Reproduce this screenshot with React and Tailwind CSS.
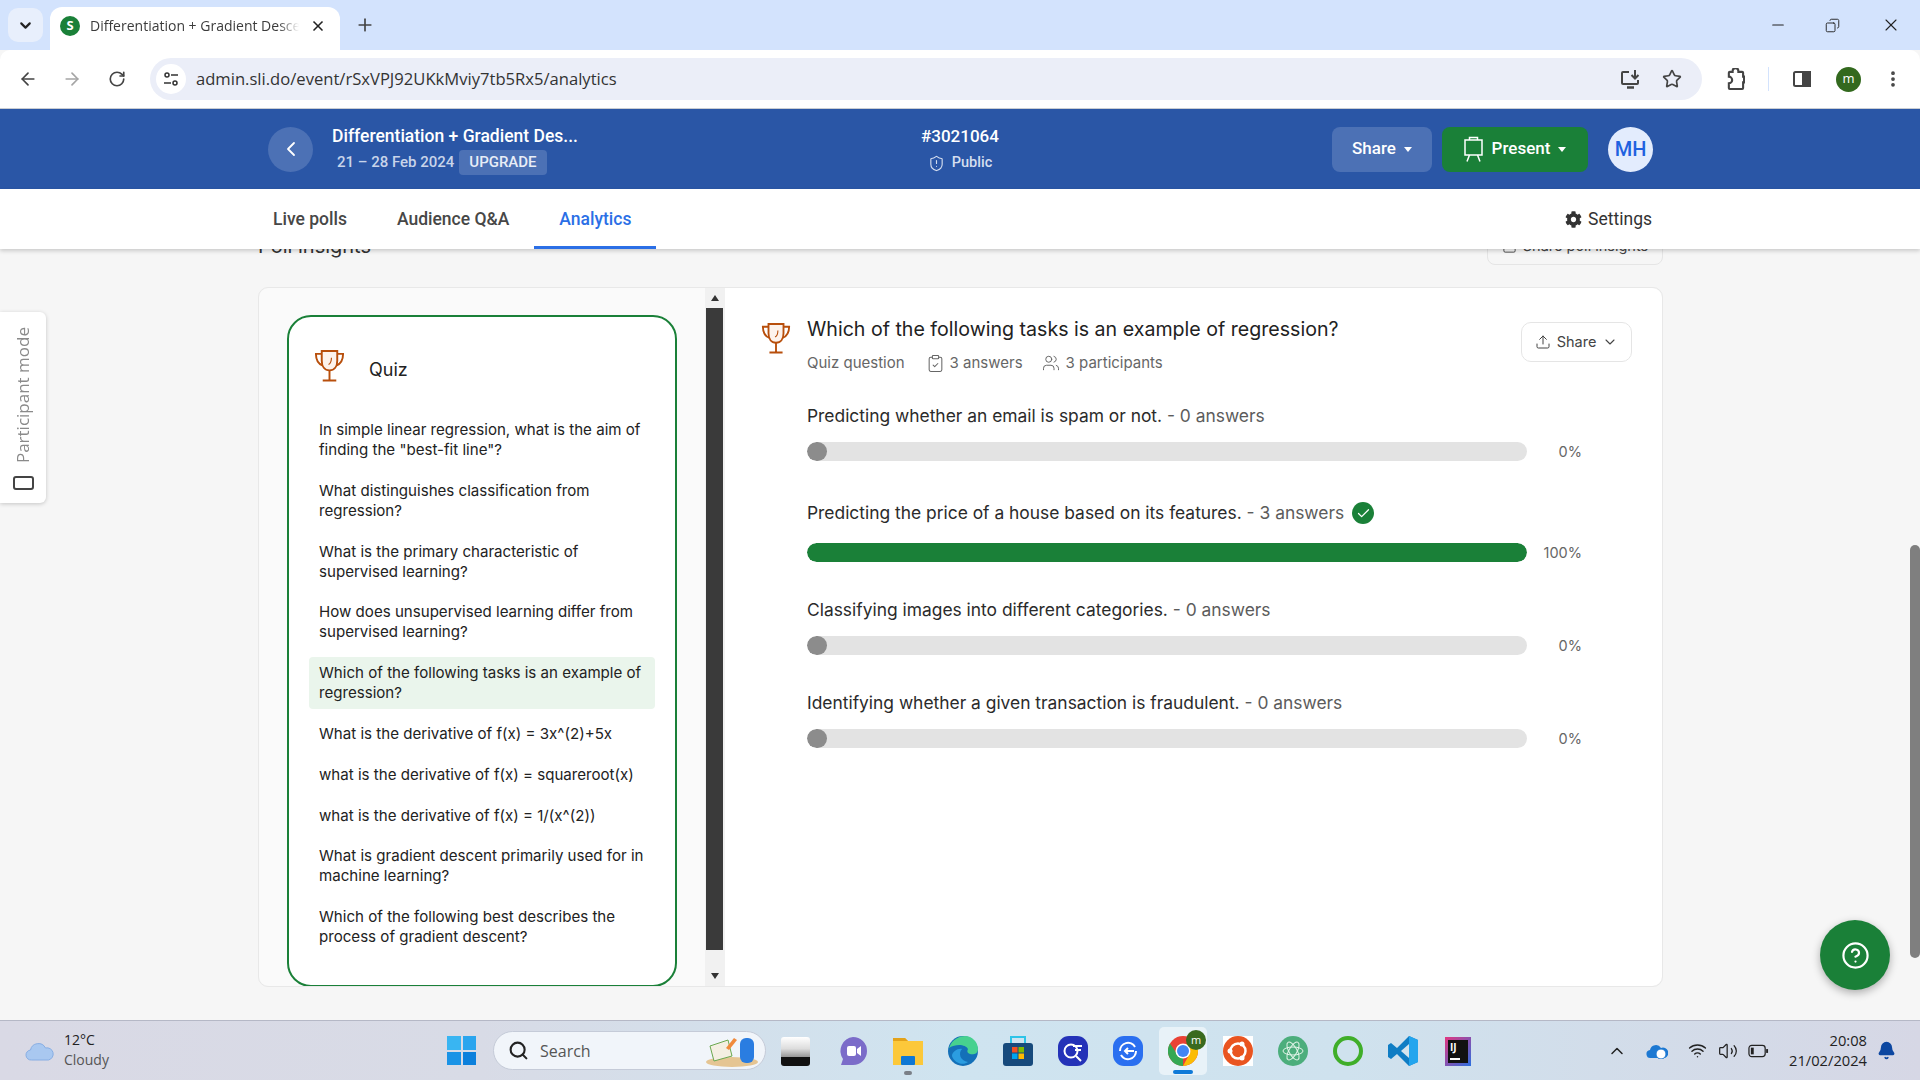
import { ArrowLeft, ArrowRight, RotateCw, Plus, X, ChevronDown, ChevronLeft, Star, EllipsisVertical, Minus, Upload, Users, ClipboardCheck, Check, Search, ChevronUp, Wifi, Volume2, Bell, CircleHelp, ShieldAlert, Copy } from "lucide-react";
import { FaCog } from "react-icons/fa";

const questions = [
  'In simple linear regression, what is the aim of finding the "best-fit line"?',
  "What distinguishes classification from regression?",
  "What is the primary characteristic of supervised learning?",
  "How does unsupervised learning differ from supervised learning?",
  "Which of the following tasks is an example of regression?",
  "What is the derivative of f(x) = 3x^(2)+5x",
  "what is the derivative of f(x) = squareroot(x)",
  "what is the derivative of f(x) = 1/(x^(2))",
  "What is gradient descent primarily used for in machine learning?",
  "Which of the following best describes the process of gradient descent?",
];

const options = [
  { label: "Predicting whether an email is spam or not.", count: "0 answers", pct: 0 },
  { label: "Predicting the price of a house based on its features.", count: "3 answers", pct: 100, correct: true },
  { label: "Classifying images into different categories.", count: "0 answers", pct: 0 },
  { label: "Identifying whether a given transaction is fraudulent.", count: "0 answers", pct: 0 },
];

function Trophy({ className }) {
  return (
    <svg viewBox="0 0 32 34" className={className} fill="none" stroke="#b84f0c" strokeWidth="2">
      <path d="M8 2h16v10c0 6-3 10-8 10s-8-4-8-10z" fill="#fdf3ec" />
      <path d="M8 5H2c0 6 2 10 7 12M24 5h6c0 6-2 10-7 12" />
      <path d="M16 22v10M9 32.500h14" />
      <path d="M18 9c0 4-1 6-3 7" strokeWidth="1.200" />
    </svg>
  );
}

function Caret() {
  return <span className="ml-2 w-0 h-0 border-x-[4.500px] border-x-transparent border-t-[5px] border-t-white" />;
}

function OptionRow({ opt }) {
  return (
    <div className="flex flex-col gap-[14px]">
      <div className="flex items-center gap-2 text-[17.400px] leading-[24px] text-[#2b2b2b]">
        <span>
          {opt.label} <span className="text-[#5c5c5c]">- {opt.count}</span>
        </span>
        {opt.correct && (
          <span className="w-[22px] h-[22px] my-[5px] rounded-full bg-[#1a8038] flex items-center justify-center">
            <Check size={15} color="white" strokeWidth={2} />
          </span>
        )}
      </div>
      <div className="flex items-center h-[19px]">
        <div className="w-[720px] h-[19px] rounded-full bg-[#e3e3e3] overflow-hidden">
          {opt.pct > 0 ? (
            <div className="h-full rounded-full bg-[#1a8038]" style={{ width: `${opt.pct}%` }} />
          ) : (
            <div className="h-full w-[20px] rounded-full bg-[#8c8c8c]" />
          )}
        </div>
        <span className="w-[55px] text-right text-[14.500px] leading-[19px] text-[#666]">{opt.pct}%</span>
      </div>
    </div>
  );
}

function ChromeBar() {
  return (
    <div className="font-['Open_Sans',sans-serif]">
      <div className="h-[50px] bg-[#d3e3fd] flex items-end relative">
        <div className="w-[35px] h-[34px] ml-[8px] mb-[8px] rounded-[10px] bg-[#e8effc] flex items-center justify-center">
          <ChevronDown size={17} strokeWidth={3} color="#222" />
        </div>
        <div className="w-[290px] h-[43px] ml-[7px] bg-white rounded-t-[12px] flex items-center pl-[10px] pb-[6px]">
          <span className="w-[20px] h-[20px] rounded-full bg-[#1a8038] text-white text-[13px] font-bold flex items-center justify-center">S</span>
          <span className="ml-[10px] w-[209px] text-[14px] text-[#3c3c3c] whitespace-nowrap overflow-hidden [mask-image:linear-gradient(to_right,black_90%,transparent)]">Differentiation + Gradient Descent</span>
          <X size={16} strokeWidth={2.500} color="#222" className="ml-[11px]" />
        </div>
        <Plus size={20} strokeWidth={2} color="#444" className="ml-[15px] mb-[15px]" />
        <div className="ml-auto self-start flex items-center h-[50px] text-[#222]">
          <Minus size={18} strokeWidth={1.500} className="mr-[38px]" />
          <Copy size={15} strokeWidth={1.500} className="mr-[41px] -scale-x-100" />
          <X size={20} strokeWidth={1.300} className="mr-[19px]" />
        </div>
      </div>
      <div className="h-[59px] bg-white rounded-t-[10px] border-b border-[#c9cdd3] flex items-center text-[#444]">
        <ArrowLeft size={20} className="ml-[18px]" strokeWidth={2} />
        <ArrowRight size={20} className="ml-[24px] text-[#a5a5a5]" strokeWidth={2} />
        <RotateCw size={18} className="ml-[26px]" strokeWidth={2.200} />
        <div className="ml-[24px] w-[1552px] h-[42px] rounded-full bg-[#ebeef8] flex items-center pl-[6px] pr-[20px]">
          <span className="w-[30px] h-[30px] rounded-full bg-white flex items-center justify-center">
            <svg viewBox="0 0 16 16" className="w-[16px] h-[16px]" fill="none" stroke="#333" strokeWidth="1.500">
              <circle cx="4" cy="4" r="2" />
              <path d="M8 4h7M1 12h7" />
              <circle cx="12" cy="12" r="2" />
            </svg>
          </span>
          <span className="ml-[10px] text-[16.600px] text-[#333]">admin.sli.do/event/rSxVPJ92UKkMviy7tb5Rx5/analytics</span>
          <svg viewBox="0 0 22 20" className="ml-auto w-[22px] h-[20px]" fill="none" stroke="#444" strokeWidth="2">
            <path d="M9 3H3a1 1 0 0 0-1 1v10a1 1 0 0 0 1 1h14a1 1 0 0 0 1-1v-3" />
            <path d="M7 18.500h7" strokeWidth="2.500" />
            <path d="M15 1v8M11.500 6l3.500 3.500L18.500 6" />
          </svg>
          <Star size={20} className="ml-[20px]" strokeWidth={2} />
        </div>
        <svg viewBox="0 0 20 24" className="ml-[24px] w-[19px] h-[23px]" fill="none" stroke="#444" strokeWidth="2.200">
          <path d="M7 4V3a3 3 0 0 1 6 0v1h4a1 1 0 0 1 1 1v4h1v6h-1v6a1 1 0 0 1-1 1H4a1 1 0 0 1-1-1v-5a3 3 0 0 0 0-7V5a1 1 0 0 1 1-1z" />
        </svg>
        <span className="ml-[23px] w-px h-[24px] bg-[#d3e3fd]" />
        <svg viewBox="0 0 20 20" className="w-[20px] h-[20px] ml-[23px]" fill="none" stroke="#444" strokeWidth="2">
          <rect x="2" y="3" width="16" height="14" rx="1.500" />
          <rect x="11" y="3" width="7" height="14" fill="#444" />
        </svg>
        <span className="ml-[24px] w-[25px] h-[25px] rounded-full bg-[#33691e] text-white text-[13px] flex items-center justify-center">m</span>
        <EllipsisVertical size={20} className="ml-[22px]" strokeWidth={2.500} />
      </div>
    </div>
  );
}

function AppHeader() {
  return (
    <div className="relative z-20 font-['Roboto',sans-serif]">
      <div className="h-[80px] bg-[#2a56a6] flex items-center pl-[268px] pr-[267px] text-white">
        <span className="w-[45px] h-[45px] rounded-full bg-[#4c71b5] flex items-center justify-center">
          <ChevronLeft size={24} strokeWidth={1.800} />
        </span>
        <div className="ml-[19px] w-[260px]">
          <div className="text-[17.500px] leading-[24px] font-medium whitespace-nowrap">Differentiation + Gradient Des...</div>
          <div className="flex items-center mt-[2px] ml-[5px]">
            <span className="text-[15px] font-medium text-[#c8d4ea]">21 – 28 Feb 2024</span>
            <span className="ml-[5px] h-[25px] px-[10px] rounded-[4px] bg-[#4c71b5] text-[15px] font-medium text-[#e8edf7] flex items-center">UPGRADE</span>
          </div>
        </div>
        <div className="ml-[268px] w-[200px] flex flex-col items-center">
          <span className="text-[17px] leading-[24px] font-medium">#3021064</span>
          <span className="mt-[4px] flex items-center gap-[7px] text-[14.500px] leading-[22px] font-medium text-[#d5deef]">
            <ShieldAlert size={17} strokeWidth={1.600} /> Public
          </span>
        </div>
        <button className="ml-auto w-[100px] h-[45px] rounded-[8px] bg-[#4c71b5] text-[17px] font-medium flex items-center justify-center">
          Share <Caret />
        </button>
        <button className="ml-[10px] w-[146px] h-[45px] rounded-[8px] bg-[#1a8038] text-[17px] font-medium flex items-center justify-center pr-[2px]">
          <svg viewBox="0 0 22 26" className="w-[23px] h-[26px] mr-[7px]" fill="none" stroke="white" strokeWidth="1.500">
            <path d="M7 4V1.500h8V4" />
            <path d="M2.500 4h17v15h-17z" />
            <path d="M7 19l-2.500 6.500M15 19l2.500 6.500" />
          </svg>
          Present <Caret />
        </button>
        <span className="ml-[20px] w-[45px] h-[45px] rounded-full bg-[#e3ecfd] text-[#1f62e0] text-[20px] font-medium flex items-center justify-center">MH</span>
      </div>
      <div className="h-[60px] bg-white shadow-[0_2px_4px_rgba(0,0,0,0.18)] flex items-stretch pl-[248px] pr-[268px] text-[17.500px] text-[#474747] font-medium">
        <span className="px-[25px] flex items-center">Live polls</span>
        <span className="px-[25px] flex items-center">Audience Q&amp;A</span>
        <span className="px-[25px] pt-[3px] flex items-center text-[#2b6fe6] border-b-[3px] border-[#2b6fe6]">Analytics</span>
        <span className="ml-auto flex items-center gap-[6px] text-[#333] font-normal">
          <FaCog size={17} color="#333" /> Settings
        </span>
      </div>
    </div>
  );
}

function QuizList() {
  return (
    <div className="w-[446px] bg-[#fafafa] rounded-l-[10px] pt-[27px] pl-[28px] flex items-start">
      <div className="w-[390px] h-[672px] bg-white rounded-[24px] border-2 border-[#1a8038] pl-[20px] pr-[20px]">
        <div className="flex items-center h-[97px] pl-[5px]">
          <Trophy className="w-[31px] h-[33px]" />
          <span className="ml-[24px] mt-[8px] text-[18px] text-[#222]">Quiz</span>
        </div>
        <div className="flex flex-col gap-[8.800px]">
          {questions.map((q, i) => (
            <div key={i} className={i === 4 ? "px-[10px] py-[6px] rounded-[4px] bg-[#eaf5ec] text-[15.100px] leading-[20px] text-[#222]" : "px-[10px] py-[6px] text-[15.100px] leading-[20px] text-[#222]"}>
              {q}
            </div>
          ))}
        </div>
      </div>
    </div>
  );
}

function ListScrollbar() {
  return (
    <div className="w-[20px] bg-[#f1f1f1] flex flex-col items-center pl-[1px] pr-[2px]">
      <span className="h-[20px] flex items-center">
        <span className="w-0 h-0 border-x-[4.500px] border-x-transparent border-b-[6px] border-b-[#333]" />
      </span>
      <div className="w-full h-[642px] bg-[#3a3a3a]" />
      <span className="h-[36px] pt-[23px]">
        <span className="block w-0 h-0 border-x-[4.500px] border-x-transparent border-t-[6px] border-t-[#333]" />
      </span>
    </div>
  );
}

function QuestionPanel() {
  return (
    <div className="flex-1 bg-white rounded-r-[10px] pl-[36px] pr-[30px] pt-[27px]">
      <div className="flex items-start">
        <Trophy className="w-[30px] h-[32px] mt-[7px]" />
        <div className="ml-[16px]">
          <div className="text-[19.600px] leading-[28px] text-[#222]">Which of the following tasks is an example of regression?</div>
          <div className="flex items-center mt-[10px] text-[15px] leading-[20px] text-[#666]">
            <span>Quiz question</span>
            <ClipboardCheck size={19} strokeWidth={1.300} className="ml-[21px] mr-[5px]" />
            <span>3 answers</span>
            <Users size={18} strokeWidth={1.300} className="ml-[19px] mr-[6px]" />
            <span>3 participants</span>
          </div>
        </div>
        <button className="ml-auto mt-[7px] w-[111px] h-[40px] rounded-[10px] border border-[#e5e5e5] text-[14.500px] text-[#444] flex items-center justify-center gap-[6px]">
          <Upload size={16} strokeWidth={1.500} /> Share <ChevronDown size={16} strokeWidth={1.600} />
        </button>
      </div>
      <div className="ml-[46px] mt-[31px] flex flex-col gap-[36px]">
        {options.map((o, i) => (
          <OptionRow key={i} opt={o} />
        ))}
      </div>
    </div>
  );
}

function TaskIcon({ children, active }) {
  return (
    <div className={active ? "w-[48px] h-[48px] rounded-[5px] bg-[#e8f2f8] flex items-center justify-center relative" : "w-[48px] h-[48px] flex items-center justify-center relative"}>
      {children}
      {active && <span className="absolute bottom-[1px] left-[14px] w-[20px] h-[4px] rounded-full bg-[#0f7ad8]" />}
    </div>
  );
}

function Taskbar() {
  return (
    <div className="h-[60px] border-t border-[#b5b8c6] bg-[linear-gradient(90deg,#d9d9e5_0%,#d8dbe6_25%,#cfe4f0_50%,#cfe2ee_70%,#d6d7e5_100%)] flex items-center font-['Open_Sans',sans-serif] text-[#222] relative">
      <svg viewBox="0 0 30 22" className="w-[31px] h-[22px] ml-[24px]">
        <path d="M7 20a5 5 0 0 1-1-10 8 8 0 0 1 15-2 6 6 0 0 1 3 12z" fill="#a9c8f0" stroke="#87aee4" />
      </svg>
      <div className="ml-[9px] w-[120px] text-[14px] leading-[20px] pb-[2px]">
        <div>12°C</div>
        <div className="text-[#555]">Cloudy</div>
      </div>
      <div className="ml-[263px] grid grid-cols-2 gap-[2px] w-[29px] h-[29px]">
        <span className="bg-[#39b5f2]" />
        <span className="bg-[#2aa5ee]" />
        <span className="bg-[#1a93e6]" />
        <span className="bg-[#0c80dc]" />
      </div>
      <div className="ml-[17px] w-[273px] h-[39px] rounded-full bg-[#f1f5fa] border border-[#c5cbd8] flex items-center pl-[14px] pr-[6px]">
        <Search size={21} strokeWidth={2.400} />
        <span className="ml-[11px] text-[16px] text-[#555]">Search</span>
        <svg viewBox="0 0 55 34" className="ml-auto w-[55px] h-[34px]">
          <ellipse cx="28" cy="28" rx="26" ry="5" fill="#e5c593" />
          <path d="M6 12l18-6 4 16-18 5z" fill="#f4efe2" stroke="#6aa84f" />
          <path d="M22 14l8-10 3 2-8 10z" fill="#f08a3c" />
          <rect x="36" y="4" width="14" height="25" rx="6" fill="#2a7de1" />
        </svg>
      </div>
      <div className="ml-[5px] flex items-center gap-[7px] pt-[1px]">
        <div className="mr-[3px]">
          <TaskIcon>
            <div className="w-[29px] h-[29px] rounded-[3px] bg-[linear-gradient(180deg,#fff_0%,#ddd_40%,#999_68%,#111_69%)]" />
          </TaskIcon>
        </div>
        <TaskIcon>
          <svg viewBox="0 0 30 30" className="w-[30px] h-[30px]">
            <path d="M15 1a14 14 0 0 1 0 28H3l2-6A14 14 0 0 1 15 1z" fill="#7b6cc9" />
            <rect x="9" y="10" width="9" height="10" rx="2" fill="#fff" />
            <path d="M19 13l4-3v10l-4-3z" fill="#fff" />
          </svg>
        </TaskIcon>
        <TaskIcon>
          <svg viewBox="0 0 30 30" className="w-[30px] h-[30px]">
            <path d="M0 2h12l3 3h15v24H0z" fill="#fcc83a" />
            <path d="M0 2h12l3 3H0z" fill="#e3a21a" />
            <rect x="8" y="20" width="14" height="9" rx="1" fill="#0f78d4" />
          </svg>
          <span className="absolute bottom-[0px] left-[20px] w-[8px] h-[4px] rounded-full bg-[#7a7f87]" />
        </TaskIcon>
        <TaskIcon>
          <svg viewBox="0 0 30 30" className="w-[30px] h-[30px]">
            <circle cx="15" cy="15" r="15" fill="#1470b8" />
            <path d="M1 12C4 3 12 0 17 0c7 0 13 6 13 13 0 5-5 6-8 5s-3-3-2-5c-2-4-11-6-19-1z" fill="#47d18f" />
            <path d="M14 13c-4 4-2 12 6 13-5 4-14 1-16-6 0-4 6-8 10-7z" fill="#2b9de0" />
          </svg>
        </TaskIcon>
        <TaskIcon>
          <svg viewBox="0 0 30 30" className="w-[30px] h-[30px]">
            <path d="M8 7V1h14v6" fill="none" stroke="#2ec4e8" strokeWidth="2" />
            <rect y="7" width="30" height="23" rx="3" fill="#174a7c" />
            <rect x="9" y="11" width="5.500" height="5.500" fill="#f25022" />
            <rect x="15.500" y="11" width="5.500" height="5.500" fill="#7fba00" />
            <rect x="9" y="17.500" width="5.500" height="5.500" fill="#00a4ef" />
            <rect x="15.500" y="17.500" width="5.500" height="5.500" fill="#ffb900" />
          </svg>
        </TaskIcon>
        <TaskIcon>
          <svg viewBox="0 0 30 30" className="w-[30px] h-[30px]" fill="none">
            <rect width="30" height="30" rx="11" fill="#2432b8" />
            <circle cx="13" cy="15" r="6.500" stroke="#fff" strokeWidth="2" />
            <path d="M18 20l5 5M15 10h9M17 14h6" stroke="#fff" strokeWidth="2" />
          </svg>
        </TaskIcon>
        <TaskIcon>
          <svg viewBox="0 0 30 30" className="w-[30px] h-[30px]" fill="none">
            <rect width="30" height="30" rx="11" fill="#2a6ff0" />
            <path d="M7 15a8 8 0 0 1 15-4M23 15a8 8 0 0 1-15 4" stroke="#fff" strokeWidth="2" />
            <path d="M12 15h9M15 12l-3 3 3 3" stroke="#fff" strokeWidth="2" />
          </svg>
        </TaskIcon>
        <TaskIcon active>
          <svg viewBox="0 0 30 30" className="w-[30px] h-[30px]">
            <circle cx="15" cy="15" r="15" fill="#e94235" />
            <path d="M15 30A15 15 0 0 1 2 7.500L9 18a7 7 0 0 0 6 4z" fill="#34a853" />
            <path d="M15 30A15 15 0 0 0 30 15c0-3-1-5-2-7H15a7 7 0 0 1 6 11z" fill="#fbbc04" />
            <circle cx="15" cy="15" r="7.500" fill="#fff" />
            <circle cx="15" cy="15" r="6" fill="#4285f4" />
          </svg>
          <span className="absolute top-[3px] right-[1px] w-[20px] h-[20px] rounded-full bg-[#3a6a1e] text-white text-[11px] flex items-center justify-center">m</span>
        </TaskIcon>
        <TaskIcon>
          <svg viewBox="0 0 30 30" className="w-[30px] h-[30px]" fill="none">
            <rect width="30" height="30" fill="#fff" />
            <circle cx="15" cy="15" r="15" fill="#e95420" />
            <circle cx="15" cy="15" r="7.500" stroke="#fff" strokeWidth="2.500" />
            <circle cx="7" cy="15" r="2.500" fill="#fff" />
            <circle cx="19" cy="8" r="2.500" fill="#fff" />
            <circle cx="19" cy="22" r="2.500" fill="#fff" />
          </svg>
        </TaskIcon>
        <TaskIcon>
          <svg viewBox="0 0 30 30" className="w-[30px] h-[30px]" fill="none">
            <circle cx="15" cy="15" r="15" fill="#4cae7c" />
            <ellipse cx="15" cy="15" rx="10" ry="4" stroke="#e4f5ea" />
            <ellipse cx="15" cy="15" rx="10" ry="4" stroke="#e4f5ea" transform="rotate(60 15 15)" />
            <ellipse cx="15" cy="15" rx="10" ry="4" stroke="#e4f5ea" transform="rotate(120 15 15)" />
          </svg>
        </TaskIcon>
        <TaskIcon>
          <svg viewBox="0 0 30 30" className="w-[30px] h-[30px]" fill="none">
            <circle cx="15" cy="15" r="13" stroke="#3fae29" strokeWidth="4" />
          </svg>
        </TaskIcon>
        <TaskIcon>
          <svg viewBox="0 0 30 30" className="w-[30px] h-[30px]">
            <path d="M21 0l9 4v22l-9 4-12-12-6 5-3-2v-12l3-2 6 5z" fill="#0f7dc4" />
            <path d="M21 0l9 4v22l-9 4z" fill="#23a5ee" />
            <path d="M21 8l-8 7 8 7z" fill="#d5e4ed" />
          </svg>
        </TaskIcon>
        <TaskIcon>
          <div className="w-[26px] h-[29px] bg-[linear-gradient(135deg,#e3357f,#2b6fe0)] p-[3px]">
            <div className="w-full h-full bg-[#111] text-white text-[10px] leading-[11px] font-bold pl-[2px] pt-[2px]">
              IJ
              <div className="w-[10px] h-[2px] bg-white mt-[5px]" />
            </div>
          </div>
        </TaskIcon>
      </div>
      <div className="ml-auto flex items-center pr-[24px]">
        <ChevronUp size={20} strokeWidth={1.800} />
        <svg viewBox="0 0 22 16" className="ml-[19px] w-[22px] h-[16px]">
          <path d="M5 15a4 4 0 0 1-1-8 6 6 0 0 1 11-2 5 5 0 0 1 4 10z" fill="#1c78d2" />
          <circle cx="15" cy="11" r="5" fill="#fff" stroke="#1c78d2" />
        </svg>
        <Wifi size={19} strokeWidth={1.800} className="ml-[20px]" />
        <Volume2 size={20} strokeWidth={1.500} className="ml-[11px]" />
        <svg viewBox="0 0 22 14" className="ml-[10px] w-[21px] h-[14px]" fill="none" stroke="#222" strokeWidth="1.300">
          <rect x="1" y="1" width="17" height="12" rx="3" />
          <rect x="3" y="3.500" width="3" height="7" fill="#222" stroke="none" />
          <path d="M20 5v4" strokeWidth="2" />
        </svg>
        <div className="ml-[20px] text-right text-[14.700px] leading-[20px] pb-[2px]">
          <div>20:08</div>
          <div>21/02/2024</div>
        </div>
        <Bell size={19} fill="#0d47a1" color="#0d47a1" className="ml-[10px]" />
      </div>
    </div>
  );
}

export default function App() {
  return (
    <div className="w-[1920px] h-[1080px] overflow-hidden flex flex-col bg-[#f6f6f6] font-['Inter',sans-serif]">
      <ChromeBar />
      <AppHeader />
      <div className="flex-1 flex relative overflow-hidden">
        <div className="w-[1910px] pl-[258px]">
          <div className="w-[1405px] flex items-center justify-between h-[38px] -mt-[22px]">
            <span className="text-[20px] text-[#333]">Poll insights</span>
            <span className="w-[176px] h-[38px] rounded-[8px] border border-[#e5e5e5] text-[14.500px] text-[#444] flex items-center justify-center gap-[6px]">
              <Upload size={15} strokeWidth={1.500} /> Share poll insights
            </span>
          </div>
          <div className="mt-[22px] w-[1405px] h-[700px] rounded-[10px] border border-[#e8e8e8] flex overflow-hidden">
            <QuizList />
            <ListScrollbar />
            <QuestionPanel />
          </div>
        </div>
        <div className="w-[10px] pt-[296px]">
          <div className="w-full h-[413px] rounded-full bg-[#7f7f7f]" />
        </div>
        {/* floating bits */}
        <div className="absolute left-0 top-[63px] w-[46px] h-[191px] bg-white rounded-r-[6px] shadow-[0_1px_4px_rgba(0,0,0,0.2)] flex flex-col items-center justify-end pb-[13px] gap-[13px]">
          <span className="[writing-mode:vertical-rl] rotate-180 text-[17px] leading-[20px] text-[#8a8a8a] font-['Open_Sans',sans-serif]">Participant mode</span>
          <span className="w-[21px] h-[14px] rounded-[3px] border-2 border-[#444]" />
        </div>
        <div className="absolute left-[1820px] top-[671px] w-[70px] h-[70px] rounded-full bg-[#1a8038] shadow-[0_3px_8px_rgba(0,0,0,0.3)] flex items-center justify-center">
          <CircleHelp size={29} color="white" strokeWidth={1.800} />
        </div>
      </div>
      <Taskbar />
    </div>
  );
}
